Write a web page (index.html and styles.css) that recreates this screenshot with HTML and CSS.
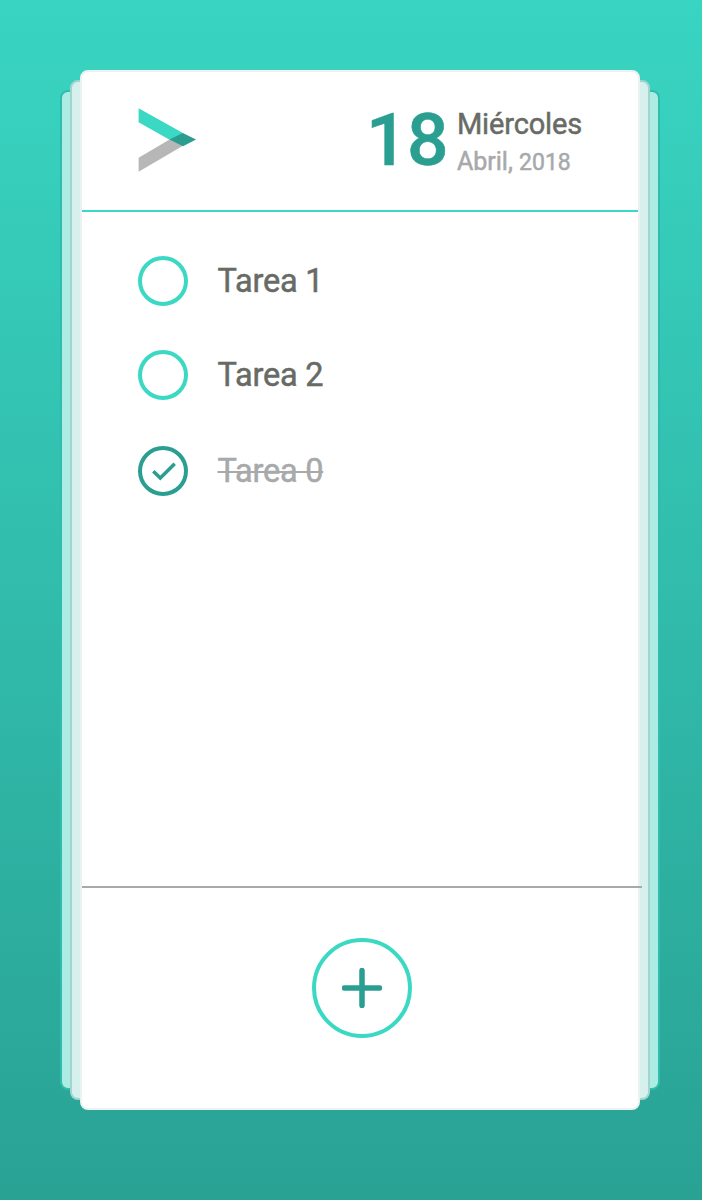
FILE: index.html
```html
<!DOCTYPE html>
<html lang="es">
<head>
<meta charset="utf-8">
<title>Tareas</title>
<link rel="stylesheet" href="styles.css">
</head>
<body>
<main class="stack">
  <div class="sheet sheet-back"></div>
  <div class="sheet sheet-middle"></div>
  <section class="card">
    <header class="header">
      <svg class="logo" width="60" height="66" viewBox="0 0 60 66">
        <path fill="#b7b7b7" d="M.6 50.7 32 32.2 45.4 38.5.6 64.7z"/>
        <path fill="#3bd8c3" d="M.6 1.3 45.4 26.3 32 33 .6 15.3z"/>
        <path fill="#2a9d8f" d="M31.5 32.5 44.8 26 58 32.5 45 39.3z"/>
      </svg>
      <div class="date">
        <span class="day">18</span>
        <div class="date-text">
          <div class="weekday">Miércoles</div>
          <div class="month"><span>Abril,</span> <span class="year">2018</span></div>
        </div>
      </div>
    </header>
    <ul class="tasks">
      <li class="task"><span class="circle"></span><span class="label">Tarea 1</span></li>
      <li class="task"><span class="circle"></span><span class="label">Tarea 2</span></li>
      <li class="task done"><span class="circle"><svg width="42" height="42" viewBox="0 0 42 42"><path d="M11.3 21.2 18.3 28 32.7 13.8"/></svg></span><span class="label">Tarea 0</span></li>
    </ul>
    <footer class="footer">
      <button class="add" aria-label="Añadir"><svg width="40" height="40" viewBox="0 0 40 40"><path d="M20 2.5v35M2.5 20h35"/></svg></button>
    </footer>
  </section>
</main>
</body>
</html>
```
FILE: styles.css
```css
* { box-sizing: border-box; }
body {
  margin: 0;
  height: 1200px;
  padding-top: 70px;
  background: linear-gradient(#39d5c2, #29a294);
  font-family: Roboto, sans-serif;
}
.stack { position: relative; width: 560px; height: 1040px; margin-left: 80px; }
.sheet { position: absolute; border: 2px solid; border-radius: 8px; }
.sheet-back { inset: 20px -20px; background: #adece4; border-color: #31bdab; }
.sheet-middle { inset: 10px -10px; background: #d6f1ed; border-color: #a3d5ce; }
.card {
  position: relative;
  display: flex;
  flex-direction: column;
  height: 100%;
  background: #fff;
  border: 2px solid #ecf2f2;
  border-radius: 8px;
}
.header {
  display: flex;
  justify-content: space-between;
  align-items: flex-start;
  height: 140px;
  padding: 35px 56px 0;
  border-bottom: 2px solid #3bd8c3;
}
.logo { display: block; }
.date { display: flex; }
.day {
  margin-right: 9px;
  color: #2a9f91;
  font-size: 73px;
  font-weight: 500;
  line-height: 67px;
  letter-spacing: -.5px;
  -webkit-text-stroke: .6px;
}
.weekday {
  color: #686b65;
  font-size: 29px;
  line-height: 34px;
  letter-spacing: -.15px;
  -webkit-text-stroke: .5px;
}
.month { color: #a7a9aa; font-size: 25px; line-height: 41px; -webkit-text-stroke: .5px; }
.year { font-size: 23px; }
.tasks { flex: 1; margin: 0; padding: 44px 56px 0; list-style: none; }
.task { display: flex; align-items: center; height: 50px; margin-bottom: 44px; }
.task.done { margin-top: 46px; }
.circle { width: 50px; height: 50px; margin-right: 29.5px; border: 4px solid #3bd8c3; border-radius: 50%; }
.circle svg { display: block; }
.circle path { fill: none; stroke: #2a9f91; stroke-width: 3.5; }
.label {
  color: #686b65;
  font-size: 32.5px;
  line-height: 38px;
  padding-bottom: 1px;
  letter-spacing: -.2px;
  -webkit-text-stroke: .5px;
}
.done .circle { border-color: #2a9f91; }
.done .label { color: #a7a9aa; text-decoration: line-through; text-decoration-thickness: 2px; }
.footer {
  display: flex;
  justify-content: center;
  width: 560px;
  height: 222px;
  padding-top: 50px;
  border-top: 2px solid #a7a9aa;
}
.add {
  display: flex;
  align-items: center;
  justify-content: center;
  width: 100px;
  height: 100px;
  padding: 0;
  background: none;
  border: 4px solid #3bd8c3;
  border-radius: 50%;
}
.add path { stroke: #2a9f91; stroke-width: 5.5; stroke-linecap: round; }
```
